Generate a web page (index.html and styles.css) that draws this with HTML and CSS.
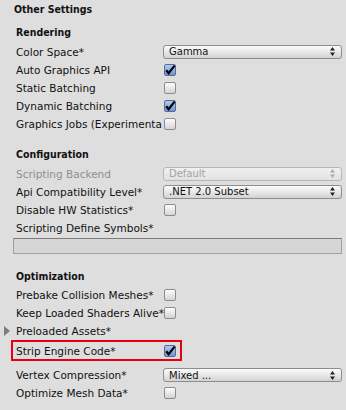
FILE: index.html
```html
<!DOCTYPE html>
<html lang="en">
<head>
    <meta charset="UTF-8">
    <meta name="viewport" content="width=device-width, initial-scale=1.0">
    <title>Other Settings</title>
    <link rel="stylesheet" href="styles.css">
</head>
<body>
    <div class="inspector">
        <div class="title">Other Settings</div>

        <!-- Rendering -->
        <div class="group group--first">
            <div class="group-title">Rendering</div>
            <div class="row">
                <span class="label">Color Space*</span>
                <div class="popup">
                    <span class="popup-text">Gamma</span>
                    <svg class="popup-arrows" width="5" height="9" viewBox="0 0 5 9"><path d="M2.5 0L5 3.5H0Z M2.5 9L5 5.5H0Z" fill="#222"/></svg>
                </div>
            </div>
            <div class="row">
                <span class="label">Auto Graphics API</span>
                <span class="toggle toggle--on"><svg width="12" height="12" viewBox="0 0 12 12"><path d="M2.2 6.2L4.6 9.2L10.6 1.6" fill="none" stroke="#000" stroke-width="2.2"/></svg></span>
            </div>
            <div class="row">
                <span class="label">Static Batching</span>
                <span class="toggle"></span>
            </div>
            <div class="row">
                <span class="label">Dynamic Batching</span>
                <span class="toggle toggle--on"><svg width="12" height="12" viewBox="0 0 12 12"><path d="M2.2 6.2L4.6 9.2L10.6 1.6" fill="none" stroke="#000" stroke-width="2.2"/></svg></span>
            </div>
            <div class="row">
                <span class="label">Graphics Jobs (Experimenta</span>
                <span class="toggle"></span>
            </div>
        </div>

        <!-- Configuration -->
        <div class="group">
            <div class="group-title">Configuration</div>
            <div class="row row--disabled">
                <span class="label">Scripting Backend</span>
                <div class="popup popup--disabled">
                    <span class="popup-text">Default</span>
                    <svg class="popup-arrows" width="5" height="9" viewBox="0 0 5 9"><path d="M2.5 0L5 3.5H0Z M2.5 9L5 5.5H0Z" fill="#aaa"/></svg>
                </div>
            </div>
            <div class="row">
                <span class="label">Api Compatibility Level*</span>
                <div class="popup">
                    <span class="popup-text">.NET 2.0 Subset</span>
                    <svg class="popup-arrows" width="5" height="9" viewBox="0 0 5 9"><path d="M2.5 0L5 3.5H0Z M2.5 9L5 5.5H0Z" fill="#222"/></svg>
                </div>
            </div>
            <div class="row">
                <span class="label">Disable HW Statistics*</span>
                <span class="toggle"></span>
            </div>
            <div class="row">
                <span class="label">Scripting Define Symbols*</span>
            </div>
            <div class="text-field"></div>
        </div>

        <!-- Optimization -->
        <div class="group">
            <div class="group-title">Optimization</div>
            <div class="row">
                <span class="label">Prebake Collision Meshes*</span>
                <span class="toggle"></span>
            </div>
            <div class="row">
                <span class="label">Keep Loaded Shaders Alive*</span>
                <span class="toggle"></span>
            </div>
            <div class="row row--foldout">
                <span class="foldout-arrow"></span>
                <span class="label">Preloaded Assets*</span>
            </div>
            <div class="row row--highlight">
                <span class="label">Strip Engine Code*</span>
                <span class="toggle toggle--on"><svg width="12" height="12" viewBox="0 0 12 12"><path d="M2.2 6.2L4.6 9.2L10.6 1.6" fill="none" stroke="#000" stroke-width="2.2"/></svg></span>
            </div>
            <div class="row row--spaced">
                <span class="label">Vertex Compression*</span>
                <div class="popup">
                    <span class="popup-text">Mixed ...</span>
                    <svg class="popup-arrows" width="5" height="9" viewBox="0 0 5 9"><path d="M2.5 0L5 3.5H0Z M2.5 9L5 5.5H0Z" fill="#222"/></svg>
                </div>
            </div>
            <div class="row">
                <span class="label">Optimize Mesh Data*</span>
                <span class="toggle"></span>
            </div>
        </div>
    </div>
</body>
</html>
```

FILE: styles.css
```css
/* Base */
* {
    box-sizing: border-box;
}

body {
    margin: 0;
    background-color: #dedede;
    color: #111;
    font-family: "DejaVu Sans", sans-serif;
    font-size: 10.5px;
    overflow: hidden;
}

/* Headings */
.title,
.group-title {
    font-family: "DejaVu Sans Condensed", "DejaVu Sans", sans-serif;
    font-weight: bold;
    line-height: 18px;
}

.title {
    padding-left: 14px;
}

.group {
    margin-top: 12.5px;
}

.group--first {
    margin-top: 5px;
}

.group-title {
    padding-left: 16px;
    margin-bottom: 1.5px;
}

/* Property rows */
.row {
    display: flex;
    align-items: center;
    height: 18px;
    padding-left: 16px;
}

.label {
    flex: none;
    width: 148px;
    white-space: nowrap;
    overflow: hidden;
}

.row--disabled .label {
    color: #8f8f8f;
}

.row--foldout {
    padding-left: 4px;
}

.foldout-arrow {
    flex: none;
    width: 0;
    height: 0;
    margin-right: 6px;
    border-left: 6px solid #7d7d7d;
    border-top: 5px solid transparent;
    border-bottom: 5px solid transparent;
}

.row--highlight {
    width: 171px;
    height: 21px;
    margin-left: 11px;
    padding-left: 3px;
    border: 2px solid #e60012;
}

.row--spaced {
    margin-top: 5px;
}

/* Popup field */
.popup {
    flex: none;
    display: flex;
    align-items: center;
    justify-content: space-between;
    width: 179px;
    height: 14px;
    margin-left: -1px;
    padding: 0 6px 0 5px;
    border: 1px solid #8d8d8d;
    border-radius: 3px;
    background: linear-gradient(#fbfbfb, #e6e6e6 55%, #d2d2d2);
    font-size: 10px;
}

.popup--disabled {
    border-color: #b7b7b7;
    background: linear-gradient(#f0f0f0, #e2e2e2);
    color: #a3a3a3;
}

.popup-arrows {
    display: block;
}

/* Toggle */
.toggle {
    flex: none;
    width: 12px;
    height: 12px;
    border: 1px solid #8c8c8c;
    border-radius: 2px;
    background: linear-gradient(#fdfdfd, #d4d4d4);
}

.toggle--on {
    border-color: #556c96;
    background: linear-gradient(#b3c9ec, #6f94d2);
}

.toggle svg {
    display: block;
    margin: -1px 0 0 -1px;
    overflow: visible;
}

/* Text field */
.text-field {
    height: 16px;
    margin: 1.5px 4px 0 13px;
    border: 1px solid #a0a0a0;
    border-top-color: #7a7a7a;
    background-color: #d6d6d6;
}
```
